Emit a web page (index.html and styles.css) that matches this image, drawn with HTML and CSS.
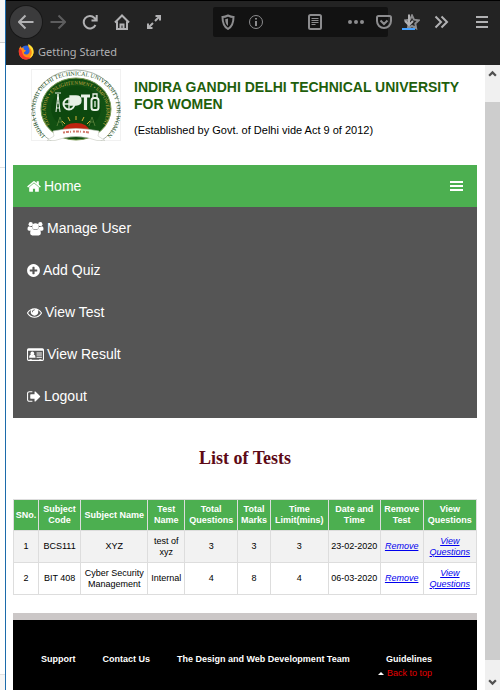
FILE: index.html
```html
<!DOCTYPE html>
<html lang="en">
<head>
<meta charset="utf-8">
<title>List of Tests</title>
<link rel="stylesheet" href="styles.css">
</head>
<body>
<div class="backdrop"><span class="pane tab"></span><span class="pane upper"></span><span class="pane lower"></span><span class="pane foot"></span></div>
<div class="window">
  <header class="chrome">
    <div class="tabs"></div>
    <div class="toolbar">
      <button class="tool back" aria-label="Back"><svg viewBox="0 0 16 16"><path d="M15.500 8H1M7.500 1.500 1 8l6.500 6.500"/></svg></button>
      <button class="tool dim" aria-label="Forward"><svg viewBox="0 0 16 16"><path d="M.500 8H15M8.500 1.500 15 8l-6.500 6.500"/></svg></button>
      <button class="tool" aria-label="Reload"><svg viewBox="0 0 16 16"><path d="M13.500 11A6.200 6.200 0 1 1 12.500 4L14 5.500M14.700 1v5.500H9.500"/></svg></button>
      <button class="tool" aria-label="Home page"><svg viewBox="0 0 16 16"><path d="M1 8.500 8 1.500l7 7M3 7.500V15h10V7.500M6.500 15v-4.500h3V15" /></svg></button>
      <button class="tool" aria-label="Full screen"><svg viewBox="0 0 16 16"><path d="M9.500 2h4.500v4.500M14 2 9 7M2 9.500V14h4.500M2 14l5-5"/></svg></button>
      <div class="urlbar">
        <button class="chip" aria-label="Protection"><svg viewBox="0 0 16 16"><path d="M8 1.500C6 2.500 4 3 2.500 3c0 6 1 9.500 5.500 12 4.500-2.500 5.500-6 5.500-12C12 3 10 2.500 8 1.500z"/><path class="solid" d="M8 4.500v7.500C6 10.500 5.300 8.500 5.200 5.200z"/></svg></button>
        <button class="chip thin" aria-label="Site information"><svg viewBox="0 0 16 16"><circle cx="8" cy="8" r="6.500"/><path class="stem" d="M8 7v5M8 4v1.500"/></svg></button>
        <span class="spring"></span>
        <button class="chip" aria-label="Reader view"><svg viewBox="0 0 16 16"><rect x="2" y="1" width="12" height="14" rx="1.500"/><path class="fine" d="M4.500 4.500h7M4.500 6.500h7M4.500 8.500h7M4.500 10.500h4"/></svg></button>
        <button class="chip dots" aria-label="Page actions"><svg viewBox="0 0 16 16"><circle class="solid" cx="2" cy="8" r="2"/><circle class="solid" cx="8" cy="8" r="2"/><circle class="solid" cx="14" cy="8" r="2"/></svg></button>
        <button class="chip" aria-label="Save to Pocket"><svg viewBox="0 0 16 16"><path d="M2.500 2h11q1.500 0 1.500 1.500V7a7 7 0 0 1-14 0V3.500Q1 2 2.500 2zM4.500 6.500 8 10l3.500-3.500"/></svg></button>
        <button class="chip" aria-label="Bookmark"><svg viewBox="0 0 16 16"><path d="m8 1.500 2 4.200 4.700.600-3.400 3.200.800 4.700L8 12l-4.100 2.200.800-4.700L1.300 6.300 6 5.700z"/></svg></button>
      </div>
      <button class="tool download" aria-label="Downloads"><svg viewBox="0 0 16 16"><path d="M8 .500v10M4 7l4 4 4-4"/><path class="progress" d="M1 15h13"/></svg></button>
      <button class="tool" aria-label="More tools"><svg viewBox="0 0 16 16"><path d="m2.500 2.500 5.500 5.500-5.500 5.500M8.500 2.500 14 8l-5.500 5.500"/></svg></button>
      <button class="tool menu" aria-label="Menu"><svg viewBox="0 0 16 16"><path d="M2 3h12M2 8h12M2 13h12"/></svg></button>
    </div>
    <a class="bookmark" href="#"><svg class="fox" viewBox="0 0 16 16"><circle cx="8.200" cy="7.500" r="6" fill="#2a5fe0"/><path fill="#ff8a16" d="M1 5 2.500 2l1 2L6 3.500C5 5 6 6 8 6.500 7 8 5.500 8 6 9.500c1.500 2 5 1 5.500-1.500C12 6 11 4 9.500 1c4 1 6 4 6 7.500A7.300 7.300 0 0 1 8 15.500C3 15.500 0 11 1 5z"/><path fill="#f5372f" d="M1 5C0 11 3 15.500 8 15.500c2 0 4-.700 5.500-2.500-4 1.500-8 0-9-3.500C4 8 4 6 2.500 5z"/><path fill="#ffe136" d="M10 0c4.500 2 6 5 5.500 9-.500 3-2.500 4.500-4 5 2.500-3 3-6 1.500-8.500C12 4 10.500 2.500 10 0z"/></svg>Getting Started</a>
  </header>
  <div class="view">
    <main class="page">
      <header class="banner" id="top">
        <svg class="crest" viewBox="0 0 90 72" role="img" aria-label="University crest">
          <defs>
            <path id="ring" d="M14.500 67C-5 48 2 6.500 45 6.500S95 48 75.500 67"/>
            <path id="motto" d="M24 62C8 49 11 15.500 45 15.500S82 49 66 62"/>
          </defs>
          <rect x=".5" y=".5" width="89" height="71" fill="#fff" stroke="#f1f1f1"/>
          <ellipse cx="45" cy="40" rx="43.500" ry="39" fill="#fff" stroke="#aab4aa"/>
          <ellipse cx="45" cy="40" rx="35" ry="31" fill="#125012" stroke="#7b9a55"/>
          <ellipse cx="45" cy="39" rx="25" ry="22" fill="#0d480e"/>
          <text class="ring"><textPath href="#ring" startOffset="50%">INDIRA GANDHI DELHI TECHNICAL UNIVERSITY FOR WOMEN</textPath></text>
          <text class="motto"><textPath href="#motto" startOffset="50%">EDUCATION • ENLIGHTENMENT • EMPOWERMENT</textPath></text>
          <g fill="none" stroke="#e8f0e6" stroke-width="1.300">
            <path d="M25 43l2-18 2 18M25.500 39h3M26 34h2M26 29h2M24 24h6" stroke-width="1"/>
            <circle cx="38" cy="35" r="5.500" stroke-width="2"/><path d="M32 35h11M38 29v12"/>
            <path d="M39 27h6q5 0 5 4.500T45 36h-6z" fill="#e8f0e6"/>
            <path d="M50 27h9M54.500 27v14" stroke-width="3.200"/>
            <rect x="60.500" y="29" width="7" height="12" rx="2.500" stroke-width="2"/><path d="M62 29v-4h4v4M64 32v6"/>
          </g>
          <g fill="none" stroke="#5d853e" stroke-width=".8"><path d="M26 57l3-9 3 9M27 53h4M58 57l3-9 3 9M59 53h4"/></g>
          <g stroke="#d8b43a" stroke-width="1"><path d="M45 51v-4M39 52l-2-4M51 52l2-4M34 55l-3-3M56 55l3-3"/></g>
          <path d="M31 63Q33 54 45 54t14 9z" fill="#bd2410"/>
          <path d="M22 62q23-5 46 0l-1 5 7 4.500h-8q-21-8-42 0h-8l7-4.500z" fill="#fff" stroke="#c6cabf" stroke-width=".6"/>
          <path d="M32 63.500q13-2 26 0" fill="none" stroke="#d27a6d" stroke-width="2" stroke-dasharray="2 1 3 1 1 2"/>
        </svg>
        <div class="heading">
          <h1>INDIRA GANDHI DELHI TECHNICAL UNIVERSITY FOR WOMEN</h1>
          <p>(Established by Govt. of Delhi vide Act 9 of 2012)</p>
        </div>
      </header>
      <nav class="nav">
        <div class="current">
          <a href="#"><svg class="w13" viewBox="64 0 1664 1792"><path d="M1472 992v480q0 26-19 45t-45 19h-384v-384h-256v384h-384q-26 0-45-19t-19-45v-480q0-1 .5-3t.5-3l575-474 575 474q1 2 1 6zm223-69l-62 74q-8 9-21 11h-3q-13 0-21-7l-692-577-692 577q-12 8-24 7-13-2-21-11l-62-74q-8-10-7-23.500t11-21.500l719-599q32-26 76-26t76 26l244 204v-195q0-14 9-23t23-9h192q14 0 23 9t9 23v408l219 182q10 8 11 21.500t-7 23.500z"/></svg>Home</a>
          <button class="burger" aria-label="Toggle menu"><svg viewBox="0 0 13 12"><path d="M0 1h13v2H0zM0 5h13v2H0zM0 9h13v2H0z"/></svg></button>
        </div>
        <a href="#"><svg class="w15" viewBox="0 0 30 28"><circle cx="6" cy="6" r="4"/><circle cx="24" cy="6" r="4"/><path d="M3 10q3 2 6 1l1 4q-3 1-4 3H3q-3 0-3-3 0-5 3-5zM27 10q-3 2-6 1l-1 4q3 1 4 3h3q3 0 3-3 0-5-3-5z"/><circle cx="15" cy="10" r="6"/><path d="M10 15q5 4 10 0 5 0 5 8 0 4-4 4H9q-4 0-4-4 0-8 5-8z"/></svg>Manage User</a>
        <a href="#"><svg class="w12" viewBox="128 0 1536 1792"><path d="M1344 960v-128q0-26-19-45t-45-19h-256v-256q0-26-19-45t-45-19h-128q-26 0-45 19t-19 45v256h-256q-26 0-45 19t-19 45v128q0 26 19 45t45 19h256v256q0 26 19 45t45 19h128q26 0 45-19t19-45v-256h256q26 0 45-19t19-45zm320-64q0 209-103 385.500t-279.500 279.500-385.500 103-385.500-103-279.500-279.500-103-385.500 103-385.500 279.500-279.500 385.500-103 385.500 103 279.500 279.500 103 385.500z"/></svg>Add Quiz</a>
        <a href="#"><svg class="w14" viewBox="0 0 1792 1792"><path d="M1664 960q-152-236-381-353 61 104 61 225 0 185-131.500 316.500t-316.500 131.500-316.500-131.500-131.500-316.500q0-121 61-225-229 117-381 353 133 205 333.500 326.500t434.500 121.500 434.500-121.500 333.500-326.500zm-720-384q0-20-14-34t-34-14q-125 0-214.500 89.500t-89.500 214.500q0 20 14 34t34 14 34-14 14-34q0-86 61-147t147-61q20 0 34-14t14-34zm848 384q0 34-20 69-140 230-376.500 368.500t-499.500 138.500-499.500-139-376.500-368q-20-35-20-69t20-69q140-229 376.500-368t499.500-139 499.500 139 376.500 368q20 35 20 69z"/></svg>View Test</a>
        <a href="#"><svg class="w16" viewBox="0 0 32 28"><path fill-rule="evenodd" d="M3 2h26q3 0 3 3v18q0 3-3 3H3q-3 0-3-3V5q0-3 3-3zM2 7v16q0 1 1 1h2v-1h4v1h14v-1h4v1h2q1 0 1-1V7z"/><circle cx="10" cy="12" r="3.500"/><path d="M7 14q3 3 6 0 3 1 3 5v1H4v-1q0-4 3-5zM18 10h10v2H18zM18 14h10v2H18zM18 18h10v2H18z"/></svg>View Result</a>
        <a href="#"><svg class="w13" viewBox="64 0 1664 1792"><path d="M704 1440q0 4 1 20t.5 26.500-3 23.500-10 19.500-20.500 6.500h-320q-119 0-203.500-84.500t-84.500-203.500v-704q0-119 84.500-203.500t203.500-84.500h320q13 0 22.500 9.500t9.500 22.500q0 4 1 20t.5 26.500-3 23.500-10 19.500-20.500 6.500h-320q-66 0-113 47t-47 113v704q0 66 47 113t113 47h312l11.500 1 11.500 3 8 5.500 7 9 2 13.500zm928-544q0 26-19 45l-544 544q-19 19-45 19t-45-19-19-45v-288h-448q-26 0-45-19t-19-45v-384q0-26 19-45t45-19h448v-288q0-26 19-45t45-19 45 19l544 544q19 19 19 45z"/></svg>Logout</a>
      </nav>
      <h2>List of Tests</h2>
      <table>
        <colgroup><col class="c-no"><col class="c-code"><col class="c-subject"><col class="c-test"><col class="c-total"><col class="c-marks"><col class="c-limit"><col class="c-date"><col class="c-remove"><col class="c-view"></colgroup>
        <thead>
          <tr><th>SNo.</th><th>Subject Code</th><th>Subject Name</th><th>Test Name</th><th>Total Questions</th><th>Total Marks</th><th>Time Limit(mins)</th><th>Date and Time</th><th>Remove Test</th><th>View Questions</th></tr>
        </thead>
        <tbody>
          <tr><td>1</td><td>BCS111</td><td>XYZ</td><td>test of xyz</td><td>3</td><td>3</td><td>3</td><td>23-02-2020</td><td><a href="#">Remove</a></td><td><a href="#">View Questions</a></td></tr>
          <tr><td>2</td><td>BIT 408</td><td>Cyber Security Management</td><td>Internal</td><td>4</td><td>8</td><td>4</td><td>06-03-2020</td><td><a href="#">Remove</a></td><td><a href="#">View Questions</a></td></tr>
        </tbody>
      </table>
      <footer class="footer">
        <div class="links"><a href="#">Support</a><a href="#">Contact Us</a><a href="#">The Design and Web Development Team</a><a href="#">Guidelines</a></div>
        <a class="totop" href="#top"><span class="caret"></span>Back to top</a>
      </footer>
    </main>
    <div class="scrollbar"><span class="end first"><svg viewBox="0 0 8 6"><path d="M1 5l3-3 3 3"/></svg></span><span class="thumb"></span><span class="end last"><svg viewBox="0 0 8 6"><path d="M1 1l3 3 3-3"/></svg></span></div>
  </div>
</div>
</body>
</html>
```
FILE: styles.css
```css
* { box-sizing: border-box; }
body { margin: 0; min-height: 100vh; display: flex; background: #fff; font-family: "Liberation Sans", Arial, sans-serif; }
svg { display: block; }
button { padding: 0; border: 0; background: none; color: inherit; font: inherit; }
a { color: inherit; text-decoration: none; }

.backdrop { width: 5px; flex: none; display: flex; flex-direction: column; }
.pane { border-bottom: 1px solid #e2e2e2; }
.tab { height: 43px; background: #f6f6f6; border-color: #cfcfcf; }
.upper { height: 125px; }
.lower { flex: 1; }
.foot { height: 15px; background: #f6f6f6; border: 0; }

.window { flex: 1; min-width: 0; display: flex; flex-direction: column; border-left: 1px solid #1c6bab; }
.chrome { background: #232323; color: #b1b1b3; padding-bottom: 4px; }
.tabs { height: 1px; background: #000; }
.toolbar { display: flex; align-items: center; height: 42px; padding: 0 2px 0 4px; }
.toolbar svg { width: 16px; height: 16px; fill: none; stroke: currentColor; stroke-width: 2; }
.tool { width: 32px; height: 32px; display: grid; place-items: center; flex: none; }
.back { border-radius: 50%; background: #3b3b3c; box-shadow: 0 0 0 1px #181818; }
.dim { color: #5d5d5e; }
.urlbar { flex: 1; height: 30px; margin-left: 43px; display: flex; align-items: center; background: #121212; border-radius: 2px; color: #8c8c8e; margin-right: 11px; padding-left: 1px; }
.urlbar .chip:last-child { margin-right: -38px; }
.chip { width: 28px; height: 28px; display: grid; place-items: center; flex: none; }
.thin svg { stroke-width: 1; }
.stem { stroke-width: 2; }
.dots { margin-left: 12px; }
.spring { flex: 1; }
.urlbar .spring + .chip { margin-right: 1px; }
.solid { fill: currentColor; stroke: none; }
.fine { stroke-width: 1; }
.download { width: 20px; margin-right: 6px; }
.progress { stroke: #45a1ff; }
.menu { margin-left: 9px; }
.bookmark { display: flex; align-items: center; gap: 4px; height: 18px; margin-left: 12px; font: 11px/18px "Noto Sans", sans-serif; }
.fox { width: 16px; height: 16px; }

.view { flex: 1; display: flex; }
.page { flex: 1; min-width: 0; display: flex; flex-direction: column; padding: 0 8px 0 7px; }
.banner { display: flex; gap: 13px; height: 100px; padding: 4px 0 0 18px; }
.crest { width: 90px; height: 72px; flex: none; }
.ring, .motto { font-family: "Liberation Serif", serif; text-anchor: middle; }
.ring { font-size: 6px; fill: #1b4f1e; }
.motto { font-size: 5px; fill: #c9ac45; }
.heading { padding-top: 10px; }
h1 { margin: 0; color: #1f5f0c; font-size: 14px; line-height: 17px; }
.heading p { margin: 11px 0 0; color: #000; font-size: 11px; line-height: 13px; }

.nav { background: #555; color: #fff; font-size: 14px; line-height: 16px; padding-bottom: 1px; }
.nav a { display: flex; align-items: center; gap: 3px; height: 42px; padding: 0 14px; }
.nav svg { height: 15px; fill: #fff; }
.nav .w12 { width: 13px; }
.nav .w13 { width: 14px; }
.nav .w14 { width: 15px; }
.nav .w15 { width: 17px; }
.nav .w16 { width: 17px; }
.current { display: flex; background: #4caf50; }
.current a { flex: 1; }
.burger { padding: 0 14px; }
.nav .burger svg { width: 13px; height: 12px; }

h2 { margin: 30px 0; color: #5d0a16; font: bold 18px/21px "Liberation Serif", serif; text-align: center; }

table { width: 100%; border-collapse: collapse; table-layout: fixed; font-size: 9px; line-height: 11px; text-align: center; color: #000; }
th, td { border: 1px solid #ddd; padding: 0; height: 32px; }
th { height: 31px; background: #4caf50; color: #fff; }
tbody tr:nth-child(odd) { background: #f2f2f2; }
td a { color: #00e; font-style: italic; text-decoration: underline; }
.c-no { width: 5.4%; }
.c-code { width: 9.1%; }
.c-subject { width: 14.5%; }
.c-test { width: 8%; }
.c-total { width: 11.4%; }
.c-marks { width: 7.1%; }
.c-limit { width: 12.5%; }
.c-date { width: 11.2%; }
.c-remove { width: 9.3%; }
.c-view { width: 11.5%; }

.footer { flex: 1; margin-top: 18px; padding: 33px 45px 0 28px; border-top: 7px solid #cbc7c7; background: #000; color: #fff; font-size: 9px; line-height: 12px; }
.links { display: flex; gap: 27px; font-weight: bold; }
.links a:last-child { margin-left: auto; }
.totop { display: flex; align-items: center; justify-content: flex-end; gap: 3px; margin-top: 2px; color: #e60000; }
.caret { border: 3px solid transparent; border-top: 0; border-bottom-color: #fff; }

.scrollbar { width: 15px; flex: none; display: flex; flex-direction: column; background: #f0f0f0; }
.end { display: flex; justify-content: center; }
.end svg { width: 9px; height: 7px; fill: none; stroke: #505050; stroke-width: 2; }
.first { height: 37px; padding-top: 5px; }
.last { height: 30px; padding-top: 19px; }
.thumb { flex: 1; background: #cdcdcd; }
```
